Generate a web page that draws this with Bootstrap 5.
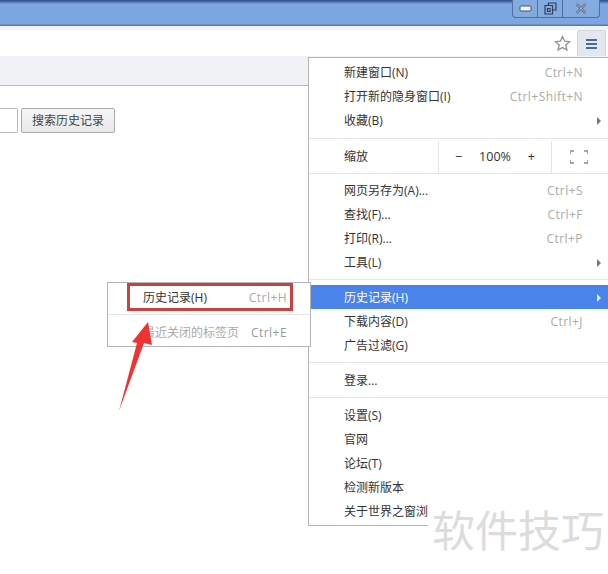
<!doctype html>
<html lang="zh-CN">
<head>
    <meta charset="utf-8">
    <meta name="viewport" content="width=device-width, initial-scale=1">
    <title>历史记录</title>
    <link href="https://cdn.jsdelivr.net/npm/bootstrap@5.3.3/dist/css/bootstrap.min.css" rel="stylesheet">
    <style>
        html, body { height: 574px; overflow: hidden; }
        body {
            background: #fff;
            font-family: "Open Sans", "Noto Sans CJK SC", sans-serif;
            font-size: 12px;
            color: #333;
        }
        .stage { position: relative; width: 608px; height: 574px; overflow: hidden; }

        /* title bar */
        .title-bar {
            height: 26px;
            background: linear-gradient(to bottom, #2c4a80 0, #4f78b4 2px, #7ba6e0 4px, #7ba6e0 24px, #5b76a8 25px);
        }
        .win-btns {
            width: 88px; height: 18px; margin-right: 8px;
            background: #84abe0;
            border: 1px solid #4f6d9e; border-top: 0;
            border-radius: 0 0 4px 4px;
        }
        .win-btn { height: 100%; border-right: 1px solid #4f6d9e; }
        .win-btn:last-child { border-right: 0; }
        .btn-min, .btn-max { width: 25px; }

        /* toolbar */
        .tool-bar { height: 30px; background: #fff; border-top: 4px solid #f2f4f0; }
        .star-icon { margin: 5px 6px 0 0; }
        .menu-btn {
            width: 29px; height: 26px; margin-right: 2px;
            background: #e3e8f0;
            border: 1px solid #cfd5de; border-bottom: 0;
            border-radius: 2px 2px 0 0;
        }

        /* history page */
        .page-strip { height: 30px; background: #f0f2f5; border-bottom: 1px solid #bcbcbc; }
        .search-row { padding-top: 22px; height: 48px; }
        .search-box { width: 18px; height: 25px; background: #fff; border: 1px solid #bbb; border-left: 0; border-radius: 0 2px 2px 0; }
        .search-btn {
            width: 94px; height: 25px; margin-left: 3px; padding: 0;
            font-size: 12px; color: #444;
            background: linear-gradient(#f6f6f6, #e8e8e8);
            border: 1px solid #aaa; border-radius: 2px;
        }

        /* browser menu */
        .app-menu {
            position: absolute; left: 308px; top: 57px; width: 300px; height: 469px;
            padding-top: 3px;
            background: #fff;
            border: 1px solid #b4b4b4; border-right: 0;
        }
        .sub-menu {
            position: absolute; left: 107px; top: 282px; width: 204px; height: 65px;
            padding-top: 2px;
            background: #fff;
            border: 1px solid #b4b4b4;
        }
        .entry { height: 24px; padding: 0 25px 0 35px; color: #333; white-space: nowrap; }
        .entry.active-row { background: #4a84ea; color: #fff; margin-left: 2px; padding-left: 33px; }
        .app-menu .rule ~ .entry { padding-top: 2px; }
        .keys { color: #aaa; letter-spacing: .45px; }
        .caret-right { position: absolute; right: 7px; width: 0; height: 0; border-left: 4px solid #777; border-top: 4px solid transparent; border-bottom: 4px solid transparent; }
        .active-row .caret-right { border-left-color: #dff0ff; }
        .rule { height: 1px; background: #e6e6e6; }
        .gap-top { margin-top: 5px; }
        .gap-bottom { margin-bottom: 5px; }
        .gap-zoom { margin-bottom: 4px; }
        .zoom-row { height: 34px; padding: 2px 0 0 35px; }
        .zoom-label { width: 94px; }
        .zoom-ctl { width: 114px; height: 32px; border-left: 1px solid #e6e6e6; border-right: 1px solid #e6e6e6; padding: 0 16px; font-size: 12.5px; }
        .zoom-full { flex: 1; padding-right: 2px; }
        .sub-menu .entry { padding: 2px 23px 0 35px; }
        .sub-menu .entry.dim { color: #aaa; margin-top: 5px; }
        .sub-menu .dim .keys { color: #999; }

        /* annotations on top of the shot */
        .red-box { position: absolute; left: 127px; top: 283px; width: 166px; height: 28px; border: 3px solid #c9423f; }
        .arrow { position: absolute; left: 110px; top: 315px; }
        .stamp {
            position: absolute; left: 428px; top: 505px; width: 180px; height: 69px;
            padding-left: 4px;
            background: #fff; color: #dcdcdc;
            font-family: "Noto Sans CJK SC", sans-serif; font-size: 43px; line-height: 46px;
            white-space: nowrap;
        }
    </style>
</head>
<body>
<div class="stage">
    <div class="title-bar d-flex justify-content-end">
        <div class="win-btns d-flex">
            <div class="win-btn btn-min d-flex align-items-center justify-content-center">
                <svg width="13" height="7"><rect x="1" y="1" width="11" height="5" rx="1" fill="#eef3fa" stroke="#44546e"/></svg>
            </div>
            <div class="win-btn btn-max d-flex align-items-center justify-content-center">
                <svg width="13" height="13"><path d="M4.500 3V1h7.500v7h-3M1 3.500h7.500v8.500H1z M3.500 6.500h2.500v3h-2.500z" fill="none" stroke="#2f3f58" stroke-width="1.200"/></svg>
            </div>
            <div class="win-btn flex-fill d-flex align-items-center justify-content-center">
                <svg width="12" height="11"><path d="M1.500 1l9 9M10.500 1l-9 9" stroke="#44546e" stroke-width="2.200"/><path d="M1.500 1l9 9M10.500 1l-9 9" stroke="#e8eff8" stroke-width=".8"/></svg>
            </div>
        </div>
    </div>

    <div class="tool-bar d-flex justify-content-end align-items-start">
        <svg class="star-icon" width="17" height="17" viewBox="0 0 17 17"><path d="M8.500 1.500l2.100 4.700 5 .5-3.800 3.300 1.100 5-4.400-2.600L4.100 15l1.100-5L1.400 6.700l5-.5z" fill="none" stroke="#8a9099" stroke-width="1.300"/></svg>
        <div class="menu-btn d-flex align-items-center justify-content-center">
            <svg width="11" height="12"><path d="M0 2h11M0 6h11M0 10h11" stroke="#4c6c94" stroke-width="2"/></svg>
        </div>
    </div>

    <div class="page-strip"></div>
    <div class="search-row d-flex align-items-start">
        <div class="search-box"></div>
        <button class="search-btn" type="button">搜索历史记录</button>
    </div>

    <div class="app-menu">
        <div class="entry d-flex align-items-center justify-content-between"><span>新建窗口(N)</span><span class="keys">Ctrl+N</span></div>
        <div class="entry d-flex align-items-center justify-content-between"><span>打开新的隐身窗口(I)</span><span class="keys">Ctrl+Shift+N</span></div>
        <div class="entry d-flex align-items-center justify-content-between"><span>收藏(B)</span><i class="caret-right"></i></div>
        <div class="rule gap-top"></div>
        <div class="zoom-row d-flex align-items-center">
            <span class="zoom-label">缩放</span>
            <div class="zoom-ctl d-flex align-items-center justify-content-between"><span>−</span><span>100%</span><span>+</span></div>
            <div class="zoom-full d-flex justify-content-center">
                <svg width="18" height="14"><path d="M0 4V1h4M14 1h4v3M18 10v3h-4M4 13H0v-3" fill="none" stroke="#8c8c8c" stroke-width="1.500"/></svg>
            </div>
        </div>
        <div class="rule gap-zoom"></div>
        <div class="entry d-flex align-items-center justify-content-between"><span>网页另存为(A)...</span><span class="keys">Ctrl+S</span></div>
        <div class="entry d-flex align-items-center justify-content-between"><span>查找(F)...</span><span class="keys">Ctrl+F</span></div>
        <div class="entry d-flex align-items-center justify-content-between"><span>打印(R)...</span><span class="keys">Ctrl+P</span></div>
        <div class="entry d-flex align-items-center justify-content-between"><span>工具(L)</span><i class="caret-right"></i></div>
        <div class="rule gap-top gap-bottom"></div>
        <div class="entry active-row d-flex align-items-center justify-content-between"><span>历史记录(H)</span><i class="caret-right"></i></div>
        <div class="entry d-flex align-items-center justify-content-between"><span>下载内容(D)</span><span class="keys">Ctrl+J</span></div>
        <div class="entry d-flex align-items-center justify-content-between"><span>广告过滤(G)</span></div>
        <div class="rule gap-top gap-bottom"></div>
        <div class="entry d-flex align-items-center justify-content-between"><span>登录...</span></div>
        <div class="rule gap-top gap-bottom"></div>
        <div class="entry d-flex align-items-center"><span>设置(S)</span></div>
        <div class="entry d-flex align-items-center"><span>官网</span></div>
        <div class="entry d-flex align-items-center"><span>论坛(T)</span></div>
        <div class="entry d-flex align-items-center"><span>检测新版本</span></div>
        <div class="entry d-flex align-items-center"><span>关于世界之窗浏</span></div>
    </div>

    <div class="sub-menu">
        <div class="entry d-flex align-items-center justify-content-between"><span>历史记录(H)</span><span class="keys">Ctrl+H</span></div>
        <div class="rule gap-top"></div>
        <div class="entry dim d-flex align-items-center justify-content-between"><span>最近关闭的标签页</span><span class="keys">Ctrl+E</span></div>
    </div>

    <div class="red-box"></div>
    <svg class="arrow" width="50" height="100" viewBox="110 315 50 100"><polygon points="148,322 132,342 137,343 119,411 144,343 152,345" fill="#ee3333"/></svg>
    <div class="stamp">软件技巧</div>
</div>
<script src="https://cdn.jsdelivr.net/npm/bootstrap@5.3.3/dist/js/bootstrap.bundle.min.js"></script>
</body>
</html>
